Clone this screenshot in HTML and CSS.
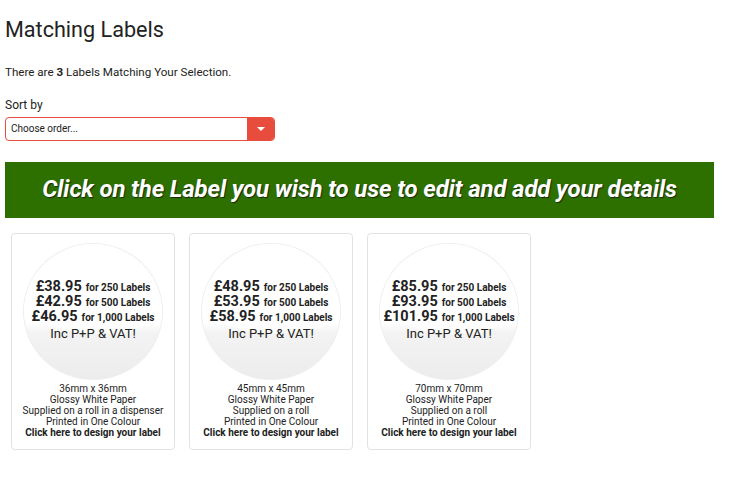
FILE: index.html
```html
<!DOCTYPE html>
<html lang="en">
<head>
    <meta charset="UTF-8">
    <title>Matching Labels</title>
    <link rel="stylesheet" href="styles.css">
</head>
<body>
    <div class="page">
        <h1>Matching Labels</h1>
        <p class="count">There are <b>3</b> Labels Matching Your Selection.</p>
        <label class="sort-label">Sort by</label>
        <div class="sort-select">
            <span class="sort-value">Choose order...</span>
            <span class="sort-button"><span class="caret"></span></span>
        </div>
        <div class="banner">Click on the Label you wish to use to edit and add your details</div>
        <div class="cards">
            <div class="card">
                <div class="circle">
                    <div class="price"><b>£38.95</b> <small>for 250 Labels</small></div>
                    <div class="price"><b>£42.95</b> <small>for 500 Labels</small></div>
                    <div class="price"><b>£46.95</b> <small>for 1,000 Labels</small></div>
                    <div class="inc">Inc P+P &amp; VAT!</div>
                </div>
                <div class="info">
                    36mm x 36mm<br>
                    Glossy White Paper<br>
                    Supplied on a roll in a dispenser<br>
                    Printed in One Colour<br>
                    <b>Click here to design your label</b>
                </div>
            </div>
            <div class="card">
                <div class="circle">
                    <div class="price"><b>£48.95</b> <small>for 250 Labels</small></div>
                    <div class="price"><b>£53.95</b> <small>for 500 Labels</small></div>
                    <div class="price"><b>£58.95</b> <small>for 1,000 Labels</small></div>
                    <div class="inc">Inc P+P &amp; VAT!</div>
                </div>
                <div class="info">
                    45mm x 45mm<br>
                    Glossy White Paper<br>
                    Supplied on a roll<br>
                    Printed in One Colour<br>
                    <b>Click here to design your label</b>
                </div>
            </div>
            <div class="card">
                <div class="circle">
                    <div class="price"><b>£85.95</b> <small>for 250 Labels</small></div>
                    <div class="price"><b>£93.95</b> <small>for 500 Labels</small></div>
                    <div class="price"><b>£101.95</b> <small>for 1,000 Labels</small></div>
                    <div class="inc">Inc P+P &amp; VAT!</div>
                </div>
                <div class="info">
                    70mm x 70mm<br>
                    Glossy White Paper<br>
                    Supplied on a roll<br>
                    Printed in One Colour<br>
                    <b>Click here to design your label</b>
                </div>
            </div>
        </div>
    </div>
</body>
</html>
```

FILE: styles.css
```css
body {
    margin: 0;
    font-family: Roboto, 'Liberation Sans', sans-serif;
    color: #222;
    background: #fff;
}
.page {
    padding: 17px 20px 20px 5px;
    width: 709px;
}
h1 {
    font-size: 21.6px;
    font-weight: 400;
    margin: 0 0 21px;
    line-height: 26px;
}
.count {
    font-size: 11.6px;
    margin: 0 0 17px;
    line-height: 16px;
}
.sort-label {
    display: block;
    font-size: 12px;
    line-height: 16px;
    margin-bottom: 4px;
}
.sort-select {
    display: flex;
    width: 270px;
    height: 24px;
    border: 1px solid #e74c3c;
    border-radius: 4px;
    box-sizing: border-box;
    overflow: hidden;
}
.sort-value {
    flex: 1;
    font-size: 10px;
    line-height: 22px;
    padding-left: 5px;
    color: #222;
}
.sort-button {
    width: 27px;
    background: #e74c3c;
    display: flex;
    align-items: center;
    justify-content: center;
}
.caret {
    width: 0;
    height: 0;
    border-left: 4px solid transparent;
    border-right: 4px solid transparent;
    border-top: 4px solid #fff;
}
.banner {
    margin-top: 21px;
    background: #2d7000;
    height: 56px;
    line-height: 54px;
    text-align: center;
    color: #fff;
    font-size: 24px;
    font-weight: 700;
    font-style: italic;
    letter-spacing: -0.15px;
    text-shadow: 1px 1px 1px #1a2a00;
}
.cards {
    display: flex;
    gap: 14px;
    margin: 15px 0 0 6px;
}
.card {
    width: 164px;
    height: 217px;
    box-sizing: border-box;
    border: 1px solid #e2e2e2;
    border-radius: 4px;
    padding-top: 9px;
}
.circle {
    position: relative;
    width: 140px;
    height: 137px;
    margin: 0 auto;
    border-radius: 50%;
    border: 1px solid #eee;
    box-sizing: border-box;
    background: linear-gradient(to bottom, #fff 0%, #fff 58%, #f3f3f3 66%, #ececec 100%);
    display: flex;
    flex-direction: column;
    justify-content: center;
    align-items: center;
    padding-bottom: 3px;
    overflow: hidden;
}
.circle::before {
    content: '';
    position: absolute;
    left: -30px;
    top: -60px;
    width: 210px;
    height: 150px;
    border-radius: 50%;
    background: rgba(255, 255, 255, 0.7);
}
.price, .inc {
    position: relative;
    white-space: nowrap;
}
.price {
    height: 15px;
    line-height: 15px;
    color: #222;
}
.price b {
    font-size: 14.5px;
    line-height: 15px;
}
.price small {
    font-size: 10px;
    font-weight: 700;
    line-height: 15px;
}
.inc {
    font-size: 13px;
    margin-top: 3px;
    line-height: 16px;
}
.info {
    margin-top: 3px;
    text-align: center;
    font-size: 10px;
    line-height: 11px;
}
```
